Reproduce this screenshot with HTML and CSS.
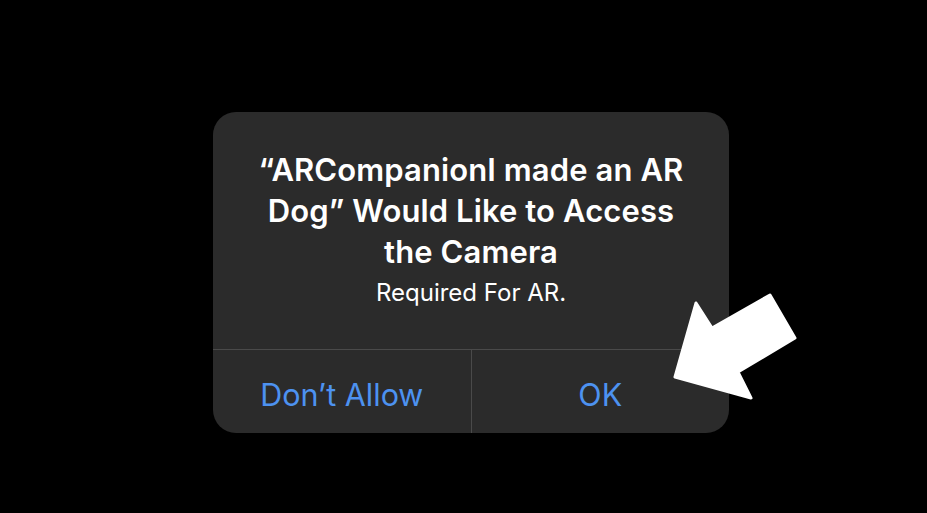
FILE: index.html
```html
<!DOCTYPE html>
<html>
<head>
  <title>Camera Access</title>
  <link rel="stylesheet" href="styles.css">
</head>
<body>
  <div class="alert">
    <div class="message">
      <h1 class="title">“ARCompanionI made an AR Dog” Would Like to Access the Camera</h1>
      <p class="subtitle">Required For AR.</p>
    </div>
    <div class="actions">
      <button class="action">Don’t Allow</button>
      <button class="action">OK</button>
    </div>
  </div>

  <svg class="pointer" viewBox="0 0 150 130" width="150" height="130">
    <polygon points="15,97 36,23 52,48 110,15 135,58 78,92 91,118" fill="#fff" stroke="#fff" stroke-width="3" stroke-linejoin="round"/>
  </svg>
</body>
</html>
```

FILE: styles.css
```css
body {
  margin: 0;
  background: #000;
  font-family: Inter, "Noto Sans", sans-serif;
  height: 513px;
  overflow: hidden;
}
.alert {
  width: 516px;
  height: 321px;
  margin: 112px 0 0 213px;
  background: #2b2b2b;
  border-radius: 23px;
  display: flex;
  flex-direction: column;
  overflow: hidden;
}
.message {
  height: 200px;
  padding: 37px 24px 0;
  text-align: center;
  color: #fff;
}
.title {
  margin: 0 auto;
  width: 450px;
  font-size: 31px;
  line-height: 41px;
  font-weight: 600;
  letter-spacing: 0.1px;
}
.subtitle {
  margin: 6px 0 0;
  font-size: 24px;
  line-height: 30px;
  font-weight: 400;
}
.actions {
  flex: 1;
  display: flex;
  border-top: 1px solid #4a4a4a;
}
.action {
  flex: 1;
  background: none;
  border: none;
  padding: 6px 0 0;
  line-height: 77px;
  font-family: inherit;
  font-size: 30.5px;
  color: #4d92f0;
}
.action + .action {
  border-left: 1px solid #4a4a4a;
}
.pointer {
  position: absolute;
  left: 660px;
  top: 280px;
}
```
